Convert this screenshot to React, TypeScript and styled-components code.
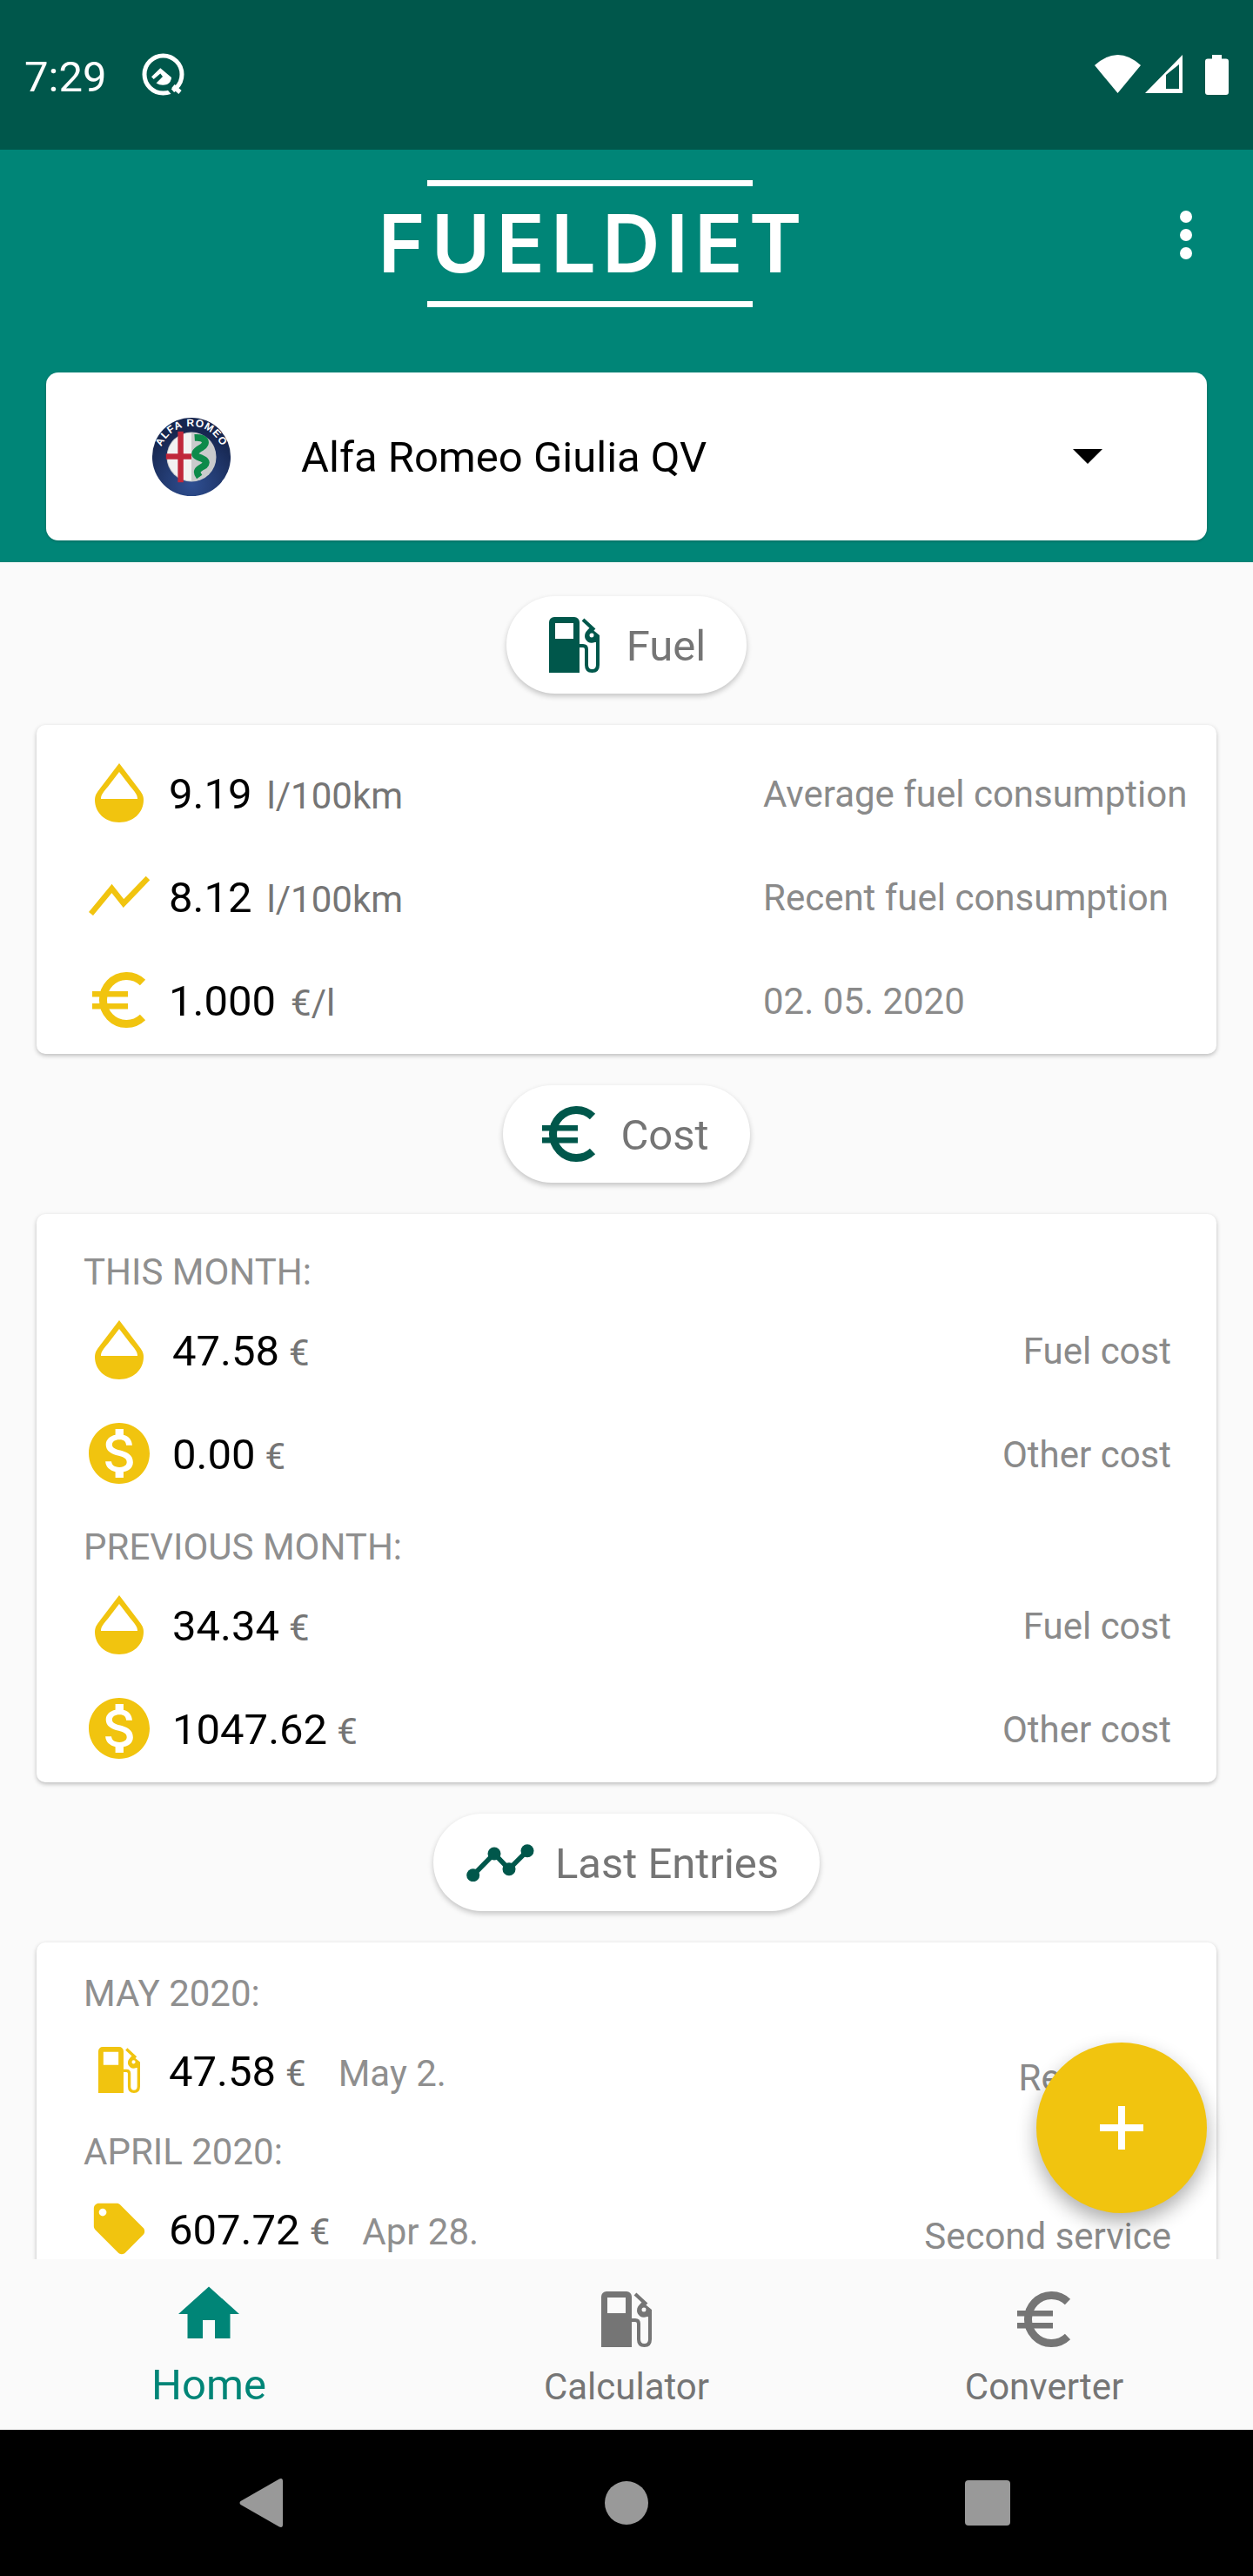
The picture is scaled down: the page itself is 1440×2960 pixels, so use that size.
import React from 'react';
import styled, { createGlobalStyle } from 'styled-components';

const TEAL = '#008577';
const TEAL_DARK = '#00574b';
const YELLOW = '#f1c40f';

const GlobalStyle = createGlobalStyle`
  html, body {
    margin: 0;
    padding: 0;
    background: #fafafa;
  }
  * {
    box-sizing: border-box;
  }
  svg {
    flex: none;
    display: block;
  }
`;

const DropIcon = () => (
  <svg width="56" height="68" viewBox="0 0 56 68">
    <path
      fill={YELLOW}
      fillRule="evenodd"
      d="M28 0L47 25C53 33 56 36 56 42C56 57 44 68 28 68C12 68 0 57 0 42C0 36 3 33 9 25ZM28 10L41 27C46 33 49 36 49 41H7C7 36 10 33 15 27Z"
    />
  </svg>
);

const TrendIcon = () => (
  <svg width="70" height="46" viewBox="0 0 70 46">
    <polyline points="2.5,43 26.5,14 40,31 68,2" fill="none" stroke={YELLOW} strokeWidth="6.5" />
  </svg>
);

const EuroIcon = ({ color, size = 62 }: { color: string; size?: number }) => (
  <svg width={size} height={(size * 64) / 62} viewBox="0 0 62 64">
    <path d="M58 12A27 27.500 0 1 0 58 52" fill="none" stroke={color} strokeWidth="9" />
    <rect x="0" y="22" width="41" height="6.5" fill={color} />
    <rect x="0" y="36" width="41" height="6.5" fill={color} />
  </svg>
);

const DollarIcon = () => (
  <svg width="84" height="84" viewBox="0 0 24 24">
    <path
      fill={YELLOW}
      d="M12 2C6.48 2 2 6.48 2 12s4.48 10 10 10 10-4.48 10-10S17.52 2 12 2zm1.41 16.09V20h-2.67v-1.93c-1.71-.36-3.16-1.46-3.27-3.4h1.96c.1 1.05.82 1.87 2.65 1.87 1.96 0 2.4-.98 2.4-1.59 0-.83-.44-1.61-2.67-2.14-2.48-.6-4.18-1.62-4.18-3.67 0-1.72 1.39-2.84 3.11-3.21V4h2.67v1.95c1.86.45 2.79 1.86 2.85 3.39H14.3c-.05-1.11-.64-1.87-2.22-1.87-1.5 0-2.4.68-2.4 1.64 0 .84.65 1.39 2.67 1.91s4.18 1.39 4.18 3.91c-.01 1.83-1.38 2.83-3.12 3.16z"
    />
  </svg>
);

const TagIcon = () => (
  <svg width="70" height="70" viewBox="0 0 24 24">
    <path
      fill={YELLOW}
      d="M21.41 11.58l-9-9C12.05 2.22 11.55 2 11 2H4c-1.1 0-2 .9-2 2v7c0 .55.22 1.05.59 1.42l9 9c.36.36.86.58 1.41.58.55 0 1.05-.22 1.41-.59l7-7c.37-.36.59-.86.59-1.41 0-.55-.23-1.06-.59-1.42zM5.5 7C4.67 7 4 6.33 4 5.5S4.67 4 5.5 4 7 4.67 7 5.5 6.33 7 5.5 7z"
    />
  </svg>
);

const PumpIcon = ({ color, width = 58 }: { color: string; width?: number }) => (
  <svg width={width} height={(width * 64) / 58} viewBox="0 0 58 64">
    <path
      fill={color}
      fillRule="evenodd"
      d="M0 6A6 6 0 0 1 6 0H29A6 6 0 0 1 35 6V64H0ZM7 7V25H28V7Z"
    />
    <path
      fill="none"
      stroke={color}
      strokeWidth="4"
      d="M35 33H39Q43 33 43 37V55Q43 62 49.500 62Q56 62 56 55V24"
    />
    <path fill="none" stroke={color} strokeWidth="4" d="M39 3L52 15" />
    <path
      fill={color}
      fillRule="evenodd"
      d="M47 12L58 21V29H52.500A8 8 0 0 1 41 22C41 18 43 16 47 12ZM49 18.500A2.500 2.500 0 1 0 49.001 23.500A2.500 2.500 0 1 0 49 18.500Z"
    />
  </svg>
);

const ChartIcon = () => (
  <svg width="78" height="43" viewBox="0 0 78 43">
    <polyline points="7.700,35.700 32,11 49,28.700 70,7.700" fill="none" stroke={TEAL_DARK} strokeWidth="5.500" />
    <circle cx="7.700" cy="35.700" r="7.500" fill={TEAL_DARK} />
    <circle cx="32" cy="11" r="7.500" fill={TEAL_DARK} />
    <circle cx="49" cy="28.700" r="7.500" fill={TEAL_DARK} />
    <circle cx="70" cy="7.700" r="7.500" fill={TEAL_DARK} />
  </svg>
);

const HomeIcon = () => (
  <svg width="84" height="84" viewBox="0 0 24 24">
    <path fill={TEAL} d="M10 20v-6h4v6h5v-8h3L12 3 2 12h3v8z" />
  </svg>
);

const AlfaLogo = () => (
  <svg width="92" height="92" viewBox="0 0 100 100">
    <defs>
      <path id="ringText" d="M10.500 58A40 40 0 1 1 89.500 58" />
      <clipPath id="leftHalf">
        <rect x="18" y="18" width="32" height="64" />
      </clipPath>
      <radialGradient id="ringFill" cx="50%" cy="85%" r="70%">
        <stop offset="0%" stopColor="#2f4f92" />
        <stop offset="100%" stopColor="#16264f" />
      </radialGradient>
    </defs>
    <circle cx="50" cy="50" r="49" fill="url(#ringFill)" />
    <circle cx="50" cy="50" r="31" fill="#c9cbcc" />
    <g clipPath="url(#leftHalf)">
      <circle cx="50" cy="50" r="30" fill="#f2f2f2" />
      <rect x="33" y="18" width="7" height="64" fill="#c0273a" />
      <rect x="18" y="46" width="32" height="7" fill="#c0273a" />
    </g>
    <path
      d="M54 26C68 25 71 33 63 38C54 43 52 47 58 50C67 53 71 56 66 61C59 65 54 67 60 75"
      fill="none"
      stroke="#0d8a4a"
      strokeWidth="8.500"
    />
    <text fontFamily="Liberation Sans, sans-serif" fontWeight="700" fontSize="13" fill="#fff" letterSpacing="1">
      <textPath href="#ringText" startOffset="50%" textAnchor="middle">
        ALFA ROMEO
      </textPath>
    </text>
  </svg>
);

const AndroidQIcon = () => (
  <svg width="49" height="49" viewBox="0 0 49 49">
    <circle cx="24.500" cy="24.500" r="21.500" fill="none" stroke="#fff" strokeWidth="5" />
    <path fill="none" stroke={TEAL_DARK} strokeWidth="4" d="M31 41L37 48" />
    <path fill="none" stroke="#fff" strokeWidth="5" d="M36 38L44 45" />
    <path
      fill="#fff"
      d="M21.300 17.300L34 28Q34 33 29 36Q22 38 16.500 34.500L24 27L21.300 23.500L13.700 30L11 27.300Z"
    />
  </svg>
);

const WifiIcon = () => (
  <svg width="53" height="44" viewBox="0 0 53 44">
    <path fill="#fff" d="M0 12Q26.500 -12 53 12L26.500 44Z" />
  </svg>
);

const SignalIcon = () => (
  <svg width="43" height="44" viewBox="0 0 43 44">
    <path fill="#fff" fillRule="evenodd" d="M0 44L43 0V44ZM24 23V39H39V11Z" />
  </svg>
);

const BatteryIcon = () => (
  <svg width="27" height="46" viewBox="0 0 27 46">
    <path fill="#fff" d="M8 0H19V4.500H24A3 3 0 0 1 27 7.500V43A3 3 0 0 1 24 46H3A3 3 0 0 1 0 43V7.500A3 3 0 0 1 3 4.500H8Z" />
  </svg>
);

const App = () => {
  return (
    <Screen>
      <GlobalStyle />
      <StatusBar>
        <StatusGroup>
          <Time>7:29</Time>
          <AndroidQIcon />
        </StatusGroup>
        <StatusIcons>
          <WifiIcon />
          <SignalIcon />
          <BatteryWrap>
            <BatteryIcon />
          </BatteryWrap>
        </StatusIcons>
      </StatusBar>

      <Header>
        <HeaderTop>
          <LogoColumn>
            <LogoBar />
            <Wordmark>FUELDIET</Wordmark>
            <LogoBar />
          </LogoColumn>
          <MenuColumn>
            <MenuDot />
            <MenuDot />
            <MenuDot />
          </MenuColumn>
        </HeaderTop>
        <CarSelect>
          <AlfaLogo />
          <CarName>Alfa Romeo Giulia QV</CarName>
          <CaretDown />
        </CarSelect>
      </Header>

      <Content>
        <Pill $left={49} $gap={31}>
          <PumpIcon color={TEAL_DARK} />
          <PillText>Fuel</PillText>
        </Pill>
        <Card $bottom={1}>
          <Row>
            <IconSlot><DropIcon /></IconSlot>
            <ValueGroup>
              <Value>9.19</Value>
              <Unit>l/100km</Unit>
            </ValueGroup>
            <SideLabel $left>Average fuel consumption</SideLabel>
          </Row>
          <Row>
            <IconSlot><TrendIcon /></IconSlot>
            <ValueGroup>
              <Value>8.12</Value>
              <Unit>l/100km</Unit>
            </ValueGroup>
            <SideLabel $left>Recent fuel consumption</SideLabel>
          </Row>
          <Row>
            <IconSlot><EuroIcon color={YELLOW} /></IconSlot>
            <ValueGroup>
              <Value>1.000</Value>
              <Unit>€/l</Unit>
            </ValueGroup>
            <SideLabel $left>02. 05. 2020</SideLabel>
          </Row>
        </Card>

        <Pill $left={45} $gap={28}>
          <EuroIcon color={TEAL_DARK} />
          <PillText>Cost</PillText>
        </Pill>
        <Card $bottom={1}>
          <GroupLabel>THIS MONTH:</GroupLabel>
          <Row>
            <IconSlot><DropIcon /></IconSlot>
            <ValueGroup $wide>
              <Value>47.58</Value>
              <Currency>€</Currency>
            </ValueGroup>
            <SideLabel>Fuel cost</SideLabel>
          </Row>
          <Row>
            <IconSlot><DollarIcon /></IconSlot>
            <ValueGroup $wide>
              <Value>0.00</Value>
              <Currency>€</Currency>
            </ValueGroup>
            <SideLabel>Other cost</SideLabel>
          </Row>
          <GroupLabel>PREVIOUS MONTH:</GroupLabel>
          <Row>
            <IconSlot><DropIcon /></IconSlot>
            <ValueGroup $wide>
              <Value>34.34</Value>
              <Currency>€</Currency>
            </ValueGroup>
            <SideLabel>Fuel cost</SideLabel>
          </Row>
          <Row>
            <IconSlot><DollarIcon /></IconSlot>
            <ValueGroup $wide>
              <Value>1047.62</Value>
              <Currency>€</Currency>
            </ValueGroup>
            <SideLabel>Other cost</SideLabel>
          </Row>
        </Card>

        <Pill $left={38} $gap={24}>
          <ChartIcon />
          <PillText>Last Entries</PillText>
        </Pill>
        <Card $compact>
          <GroupLabel $short>MAY 2020:</GroupLabel>
          <Row>
            <IconSlot><PumpIcon color={YELLOW} width={48} /></IconSlot>
            <ValueGroup>
              <Value>47.58</Value>
              <Currency>€</Currency>
              <EntryDate>May 2.</EntryDate>
            </ValueGroup>
            <SideLabel $low>Refueling</SideLabel>
          </Row>
          <GroupLabel $short>APRIL 2020:</GroupLabel>
          <Row>
            <IconSlot><TagIcon /></IconSlot>
            <ValueGroup>
              <Value>607.72</Value>
              <Currency>€</Currency>
              <EntryDate>Apr 28.</EntryDate>
            </ValueGroup>
            <SideLabel $low>Second service</SideLabel>
          </Row>
        </Card>
      </Content>

      <BottomNav>
        <Tab>
          <TabIcon $active><HomeIcon /></TabIcon>
          <TabLabel $active>Home</TabLabel>
        </Tab>
        <Tab>
          <TabIcon><PumpIcon color="#757575" /></TabIcon>
          <TabLabel>Calculator</TabLabel>
        </Tab>
        <Tab>
          <TabIcon><EuroIcon color="#757575" /></TabIcon>
          <TabLabel>Converter</TabLabel>
        </Tab>
      </BottomNav>

      <SystemNav>
        <svg width="50" height="56" viewBox="0 0 50 56">
          <path fill="#999" d="M46 0.500Q50 -1 50 3V53Q50 57 46 55.500L1.500 30Q-0.500 28 1.500 26Z" />
        </svg>
        <HomeDot />
        <RecentSquare />
      </SystemNav>

      <Fab>
        <svg width="50" height="50" viewBox="0 0 50 50">
          <rect x="21" y="0" width="8" height="50" fill="#fff" />
          <rect x="0" y="21" width="50" height="8" fill="#fff" />
        </svg>
      </Fab>
    </Screen>
  );
};

export default App;

const Screen = styled.div`
  position: relative;
  display: flex;
  flex-direction: column;
  width: 1440px;
  height: 2960px;
  overflow: hidden;
  background: #fafafa;
  font-family: Roboto, 'Liberation Sans', sans-serif;
`;

const StatusBar = styled.div`
  display: flex;
  justify-content: space-between;
  flex: 0 0 172px;
  padding: 61px 28px 0 28px;
  background: ${TEAL_DARK};
`;

const StatusGroup = styled.div`
  display: flex;
  align-items: flex-start;
  gap: 41px;
`;

const Time = styled.div`
  padding-top: 3px;
  color: #fff;
  font-size: 49px;
  line-height: 49px;
`;

const StatusIcons = styled.div`
  display: flex;
  align-items: flex-start;
  gap: 5px;
  padding-top: 2px;
`;

const BatteryWrap = styled.div`
  margin-left: 21px;
`;

const Header = styled.div`
  flex: 0 0 474px;
  background: ${TEAL};
`;

const HeaderTop = styled.div`
  display: flex;
  height: 256px;
`;

const LogoColumn = styled.div`
  flex: 1;
  display: flex;
  flex-direction: column;
  align-items: center;
  padding-top: 35px;
`;

const LogoBar = styled.div`
  width: 374px;
  height: 7px;
  background: #fff;
`;

const Wordmark = styled.div`
  height: 132px;
  margin-right: -7px;
  color: #fff;
  font-family: Inter, sans-serif;
  font-size: 92px;
  font-weight: 600;
  line-height: 132px;
  letter-spacing: 7px;
`;

const MenuColumn = styled.div`
  flex: 0 0 84px;
  display: flex;
  flex-direction: column;
  gap: 7px;
  padding-top: 70px;
`;

const MenuDot = styled.div`
  width: 14px;
  height: 14px;
  border-radius: 50%;
  background: #fff;
`;

const CarSelect = styled.div`
  display: flex;
  align-items: center;
  height: 193px;
  margin: 0 53px;
  padding: 0 120px 0 121px;
  border-radius: 14px;
  background: #fff;
  box-shadow: 0 1px 3px rgba(0, 0, 0, 0.2);
`;

const CarName = styled.div`
  margin-left: 80px;
  padding-top: 2px;
  color: #000;
  font-size: 49px;
`;

const CaretDown = styled.div`
  width: 0;
  height: 0;
  margin-left: auto;
  border-left: 17.5px solid transparent;
  border-right: 17.5px solid transparent;
  border-top: 17px solid #000;
`;

const Content = styled.div`
  flex: 1;
  display: flex;
  flex-direction: column;
  align-items: center;
  gap: 36px;
  min-height: 0;
  padding: 39px 42px 0;
  overflow: hidden;
`;

const Pill = styled.div<{ $left: number; $gap: number }>`
  flex: none;
  display: flex;
  align-items: center;
  gap: ${p => p.$gap}px;
  height: 112px;
  padding: 0 47px 0 ${p => p.$left}px;
  border-radius: 56px;
  background: #fff;
  box-shadow: 0 3px 6px rgba(0, 0, 0, 0.22);
`;

const PillText = styled.div`
  padding-top: 2px;
  color: #757575;
  font-size: 49px;
`;

const Card = styled.div<{ $compact?: boolean; $bottom?: number }>`
  flex: none;
  width: 100%;
  padding: ${p => (p.$compact ? 26 : 20)}px 0 ${p => p.$bottom ?? 0}px;
  border-radius: 10px;
  background: #fff;
  box-shadow: 0 2px 5px rgba(0, 0, 0, 0.25);
`;

const GroupLabel = styled.div<{ $short?: boolean }>`
  display: flex;
  align-items: flex-end;
  height: ${p => (p.$short ? 63 : 78)}px;
  padding: 0 0 ${p => (p.$short ? 6 : 7)}px 54px;
  color: #8f8f8f;
  font-size: 42px;
  line-height: 49px;
`;

const Row = styled.div`
  display: flex;
  align-items: center;
  height: 119px;
  padding-left: 60px;
`;

const IconSlot = styled.div`
  flex: 0 0 70px;
  min-width: 0;
  display: flex;
  align-items: center;
  justify-content: center;
  padding-bottom: 4px;
`;

const ValueGroup = styled.div<{ $wide?: boolean }>`
  flex: 1;
  display: flex;
  align-items: baseline;
  padding-left: ${p => (p.$wide ? 26 : 22)}px;
`;

const Value = styled.span`
  color: #000;
  font-size: 49px;
`;

const Unit = styled.span`
  margin-left: 17px;
  color: #757575;
  font-size: 42px;
`;

const Currency = styled.span`
  margin-left: 11px;
  color: #757575;
  font-size: 42px;
`;

const EntryDate = styled.span`
  margin-left: 37px;
  color: #8f8f8f;
  font-size: 42px;
`;

const SideLabel = styled.div<{ $left?: boolean; $low?: boolean }>`
  flex: none;
  width: ${p => (p.$left ? '521px' : 'auto')};
  margin-top: ${p => (p.$low ? 14 : 0)}px;
  margin-right: ${p => (p.$left ? 0 : 52)}px;
  color: #8a8a8a;
  font-size: 42px;
`;

const BottomNav = styled.div`
  flex: 0 0 196px;
  display: grid;
  grid-template-columns: repeat(3, 1fr);
  background: #fafafa;
`;

const Tab = styled.div`
  display: flex;
  flex-direction: column;
  align-items: center;
  padding-top: 21px;
`;

const TabIcon = styled.div<{ $active?: boolean }>`
  display: flex;
  align-items: flex-end;
  height: 84px;
  padding-bottom: ${p => (p.$active ? 0 : 4)}px;
`;

const TabLabel = styled.div<{ $active?: boolean }>`
  margin-top: 12px;
  color: ${p => (p.$active ? TEAL : '#757575')};
  font-size: ${p => (p.$active ? 49 : 42)}px;
  line-height: ${p => (p.$active ? 56 : 60)}px;
`;

const SystemNav = styled.div`
  flex: 0 0 168px;
  display: grid;
  grid-template-columns: 420px 414px 52px;
  align-items: center;
  padding-left: 275px;
  background: #000;
`;

const HomeDot = styled.div`
  width: 50px;
  height: 50px;
  border-radius: 50%;
  background: #999;
`;

const RecentSquare = styled.div`
  width: 52px;
  height: 52px;
  border-radius: 4px;
  background: #999;
`;

const Fab = styled.div`
  position: absolute;
  left: 1191px;
  top: 2347px;
  display: flex;
  align-items: center;
  justify-content: center;
  width: 196px;
  height: 196px;
  border-radius: 50%;
  background: ${YELLOW};
  box-shadow: 0 10px 22px rgba(0, 0, 0, 0.32);
`;
